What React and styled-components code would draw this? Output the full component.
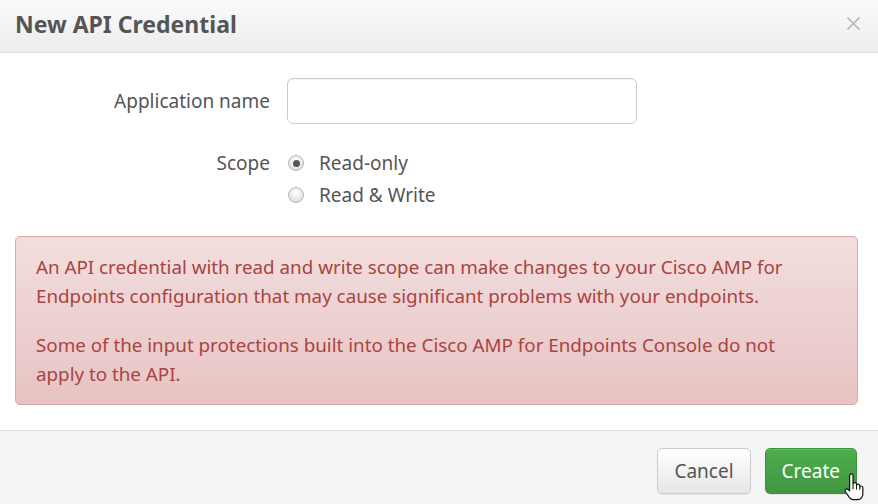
import React from "react";
import styled, { createGlobalStyle } from "styled-components";

const Global = createGlobalStyle`
  html, body { margin: 0; padding: 0; background: #fff; }
  body { width: 878px; height: 504px; overflow: hidden; font-family: "Noto Sans", "Open Sans", sans-serif; }
  * { box-sizing: border-box; }
`;

const Dialog = styled.div`
  width: 878px;
  height: 504px;
  display: flex;
  flex-direction: column;
  background: #fff;
  color: #555;
`;

const Header = styled.div`
  height: 53px;
  flex: none;
  display: flex;
  align-items: center;
  justify-content: space-between;
  padding: 0 16px 5px 15px;
  background: linear-gradient(#fbfbfb, #ececec);
  border-bottom: 1px solid #e2e2e2;
`;

const Title = styled.h3`
  margin: 0;
  font-size: 23px;
  font-weight: 700;
  color: #555;
`;

const Close = styled.button`
  border: 0;
  background: none;
  padding: 0;
  width: 18px;
  height: 18px;
  display: flex;
  align-items: center;
  justify-content: center;
  cursor: pointer;
`;

const Body = styled.div`
  flex: none;
  padding: 25px 20px 25px 15px;
`;

const Form = styled.div`
  display: grid;
  grid-template-columns: 255px 350px;
  column-gap: 17px;
  row-gap: 23px;
  align-items: start;
`;

const Label = styled.label`
  text-align: right;
  font-size: 19px;
  line-height: ${(p) => p.$lh || "46px"};
  color: #555;
`;

const Input = styled.input`
  width: 350px;
  height: 46px;
  border: 1px solid #ccc;
  border-radius: 6px;
  font: inherit;
  padding: 0 12px;
  box-shadow: inset 0 1px 1px rgba(0, 0, 0, 0.04);
`;

const Options = styled.div`
  display: flex;
  flex-direction: column;
`;

const Option = styled.label`
  display: flex;
  align-items: center;
  height: 32px;
  font-size: 19px;
  color: #555;
  gap: 15px;
`;

const RadioDot = styled.span`
  width: 16px;
  height: 16px;
  margin-left: 1px;
  border-radius: 50%;
  border: 1px solid #b5b5b5;
  background: radial-gradient(circle at 50% 35%, #fdfdfd, #d8d8d8);
  display: flex;
  align-items: center;
  justify-content: center;
  &::after {
    content: "";
    width: 7px;
    height: 7px;
    border-radius: 50%;
    background: ${(p) => (p.$checked ? "#555" : "transparent")};
  }
`;

const Alert = styled.div`
  margin-top: 25px;
  border: 1px solid #dca7a7;
  border-radius: 5px;
  background: linear-gradient(#f2dede, #e7c3c3);
  color: #a94442;
  padding: 16px 50px 15px 20px;
  font-size: 18.8px;
  line-height: 29px;
  p { margin: 0; }
  p + p { margin-top: 20px; }
`;

const Footer = styled.div`
  flex: 1;
  border-top: 1px solid #e2e2e2;
  background: #f5f5f5;
  display: flex;
  justify-content: flex-end;
  align-items: flex-start;
  gap: 14px;
  padding: 17px 21px 0 0;
`;

const Button = styled.button`
  position: relative;
  height: 46px;
  padding: 0 16px;
  border-radius: 5px;
  font-family: inherit;
  font-size: 19px;
  cursor: pointer;
  border: 1px solid ${(p) => (p.$primary ? "#3e8f3e" : "#ccc")};
  color: ${(p) => (p.$primary ? "#fff" : "#555")};
  background: ${(p) =>
    p.$primary
      ? "linear-gradient(#4cae4c, #419641)"
      : "linear-gradient(#ffffff, #e6e6e6)"};
  box-shadow: inset 0 1px 0 rgba(255, 255, 255, 0.15), 0 1px 1px rgba(0, 0, 0, 0.075);
`;

const Cursor = styled.svg`
  position: absolute;
  left: 77px;
  top: 24px;
  pointer-events: none;
`;

function HandCursor() {
  return (
    <Cursor width="24" height="28" viewBox="0 0 22 26">
      <path
        d="M6 2.5c0-1 .7-1.7 1.6-1.7S9.2 1.5 9.2 2.5V10c.3-.8 1-1.2 1.7-1.1.9.1 1.5.8 1.5 1.7v.6c.3-.6.9-.9 1.6-.8.9.1 1.4.8 1.4 1.6v.8c.3-.5.9-.8 1.5-.7.9.1 1.4.8 1.4 1.6v5.5c0 2.9-1.9 5.6-4.8 5.6H9.4c-1.5 0-2.6-.7-3.5-1.9l-3.8-5.5c-.5-.8-.4-1.8.4-2.3.7-.5 1.7-.3 2.3.4L6 16.6V2.5z"
        fill="#fff"
        stroke="#111"
        strokeWidth="1.1"
        strokeLinejoin="round"
      />
      <path d="M9.2 10v5M12.4 11.2v4.2M15.5 12.8v2.8" stroke="#111" strokeWidth="1" />
    </Cursor>
  );
}

export default function App() {
  return (
    <>
      <Global />
      <Dialog>
        <Header>
          <Title>New API Credential</Title>
          <Close aria-label="Close">
            <svg width="15" height="15" viewBox="0 0 15 15">
              <path d="M1.5 1.5l12 12M13.5 1.5l-12 12" stroke="#b4b4b4" strokeWidth="1.6" />
            </svg>
          </Close>
        </Header>
        <Body>
          <Form>
            <Label>Application name</Label>
            <Input type="text" />
            <Label $lh="32px">Scope</Label>
            <Options>
              <Option>
                <RadioDot $checked />
                Read-only
              </Option>
              <Option>
                <RadioDot />
                Read &amp; Write
              </Option>
            </Options>
          </Form>
          <Alert>
            <p>
              An API credential with read and write scope can make changes to your Cisco AMP for
              Endpoints configuration that may cause significant problems with your endpoints.
            </p>
            <p>
              Some of the input protections built into the Cisco AMP for Endpoints Console do not
              apply to the API.
            </p>
          </Alert>
        </Body>
        <Footer>
          <Button>Cancel</Button>
          <Button $primary>
            Create
            <HandCursor />
          </Button>
        </Footer>
      </Dialog>
    </>
  );
}
